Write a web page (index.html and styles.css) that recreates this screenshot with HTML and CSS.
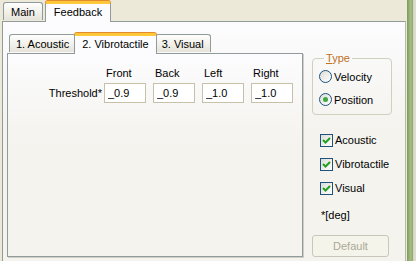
FILE: index.html
```html
<!DOCTYPE html>
<html>
    <head>
        <title>Feedback</title>
        <meta charset="UTF-8">
        <link rel="stylesheet" href="styles.css">
    </head>
    <body>
        <div class="window">
            <div class="tabs outer-tabs">
                <div class="tab">Main</div>
                <div class="tab active">Feedback</div>
            </div>
            <div class="page outer-page">
                <div class="left-col">
                    <div class="tabs inner-tabs">
                        <div class="tab">1. Acoustic</div>
                        <div class="tab active">2. Vibrotactile</div>
                        <div class="tab">3. Visual</div>
                    </div>
                    <div class="page inner-page">
                        <div class="thresholds">
                            <span></span>
                            <span class="col-label">Front</span>
                            <span class="col-label">Back</span>
                            <span class="col-label">Left</span>
                            <span class="col-label">Right</span>
                            <span class="row-label">Threshold*</span>
                            <input type="text" value="_0.9">
                            <input type="text" value="_0.9">
                            <input type="text" value="_1.0">
                            <input type="text" value="_1.0">
                        </div>
                    </div>
                </div>

                <div class="right-col">
                    <fieldset class="group">
                        <legend><u>T</u>ype</legend>
                        <label class="radio"><span class="dot"></span>Velocity</label>
                        <label class="radio"><span class="dot on"></span>Position</label>
                    </fieldset>

                    <div class="checks">
                        <label class="check"><span class="box"><svg width="11" height="11" viewBox="0 0 11 11"><path d="M2 5 L4.5 7.5 L9 3" fill="none" stroke="#21a121" stroke-width="2"/></svg></span>Acoustic</label>
                        <label class="check"><span class="box"><svg width="11" height="11" viewBox="0 0 11 11"><path d="M2 5 L4.5 7.5 L9 3" fill="none" stroke="#21a121" stroke-width="2"/></svg></span>Vibrotactile</label>
                        <label class="check"><span class="box"><svg width="11" height="11" viewBox="0 0 11 11"><path d="M2 5 L4.5 7.5 L9 3" fill="none" stroke="#21a121" stroke-width="2"/></svg></span>Visual</label>
                    </div>

                    <div class="unit">*[deg]</div>
                    <button type="button" class="btn" disabled>Default</button>
                </div>
            </div>
        </div>
        <div class="edge"></div>
    </body>
</html>
```
FILE: styles.css
```css
body {
    margin: 0;
    width: 416px;
    height: 261px;
    overflow: hidden;
    display: flex;
    background-color: #ece9d8;
    font-family: "Liberation Sans", Arial, sans-serif;
    font-size: 11px;
    color: #000;
}
.window {
    width: 407px;
}
.edge {
    width: 9px;
    margin-left: 1px;
    background: linear-gradient(to right, #7b9a5a, #a6bd85 40%, #8aa766 70%, #d8d6c8 72%, #e2e0d4);
}

/* tabs */
.tabs {
    display: flex;
    align-items: flex-end;
    position: relative;
    z-index: 2;
}
.tab {
    height: 18px;
    line-height: 18px;
    padding: 0 7px;
    border: 1px solid #919b9c;
    border-bottom: none;
    border-radius: 3px 3px 0 0;
    background: linear-gradient(#fefefe, #f0efe8 60%, #e5e3da);
    box-sizing: border-box;
    margin-bottom: 1px;
}
.tab.active {
    height: 21px;
    line-height: 16px;
    border-top: 3px solid #ffc83c;
    box-shadow: 0 -1px 0 #e68b2c;
    background: #fcfcfe;
    margin: 0 -2px -1px -2px;
    padding: 0 8px;
    position: relative;
}
.outer-tabs {
    height: 21px;
    padding-left: 3px;
}
.outer-tabs .tab {
    margin-right: 2px;
}
.outer-tabs .tab.active {
    margin-left: 0;
}
.page {
    border: 1px solid #919b9c;
    background: linear-gradient(#fcfcfe, #f4f3ee 45%);
}
.outer-page {
    margin-left: 2px;
    height: 240px;
    display: flex;
    padding: 12px 0 0 4px;
    box-sizing: border-box;
    border-right-color: #b9b8ae;
    border-bottom: none;
}

/* inner tab control */
.left-col {
    width: 296px;
}
.inner-tabs {
    height: 19px;
    padding-left: 2px;
}
.inner-tabs .tab {
    padding: 0 6px;
}
.inner-tabs .tab.active {
    padding: 0 7px;
}
.inner-page {
    height: 202px;
    box-shadow: 1px 1px 0 #d0cfc6;
}
.thresholds {
    display: grid;
    grid-template-columns: 89px repeat(4, 42px);
    column-gap: 7px;
    row-gap: 4px;
    padding-top: 13px;
    align-items: center;
}
.col-label {
    padding-left: 2px;
}
.row-label {
    text-align: right;
    margin-right: -5px;
}
.thresholds input {
    width: 42px;
    height: 20px;
    box-sizing: border-box;
    border: 1px solid #c9c0a9;
    padding: 0 3px;
    font: inherit;
    background: #fff;
}

/* right column */
.right-col {
    width: 80px;
    margin-left: 9px;
}
.group {
    margin: 0;
    margin-top: 18px;
    padding: 1px 0 3px 6px;
    border: 1px solid #d0d0bf;
    border-radius: 4px;
}
.group legend {
    margin-left: 5px;
    padding: 0 2px;
    color: #c0701e;
}
.radio {
    display: flex;
    align-items: center;
    height: 23px;
}
.dot {
    width: 11px;
    height: 11px;
    border: 1px solid #1c5180;
    border-radius: 50%;
    background: linear-gradient(135deg, #dcdcd6, #fff);
    margin-right: 2px;
    position: relative;
}
.dot.on::after {
    content: "";
    position: absolute;
    left: 3px;
    top: 3px;
    width: 5px;
    height: 5px;
    border-radius: 50%;
    background: #3da83d;
}
.checks {
    margin-top: 13px;
    padding-left: 8px;
}
.check {
    display: flex;
    align-items: center;
    height: 24px;
}
.box {
    width: 11px;
    height: 11px;
    border: 1px solid #1c5180;
    background: linear-gradient(135deg, #dcdcd6, #fff);
    margin-right: 2px;
    display: flex;
}
.unit {
    padding-left: 9px;
    margin-top: 9px;
}
.btn {
    margin-top: 14px;
    width: 77px;
    height: 22px;
    font: inherit;
    color: #aca899;
    background: #f5f4ea;
    border: 1px solid #c9c7ba;
    border-radius: 3px;
}
```
